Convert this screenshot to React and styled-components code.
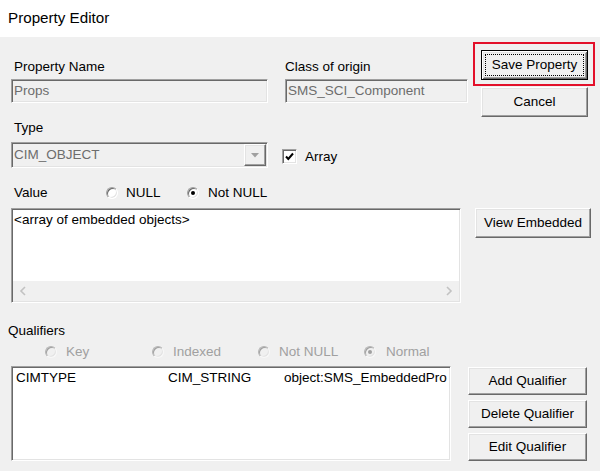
import React from 'react';
import styled, { createGlobalStyle } from 'styled-components';

const GlobalStyle = createGlobalStyle`
  html, body { margin: 0; padding: 0; }
  body {
    width: 600px; height: 471px; overflow: hidden; background: #f0f0f0;
    font-family: "Liberation Sans", Arial, sans-serif;
  }
`;

const Window = styled.div`
  width: 600px; height: 471px; display: flex; flex-direction: column;
  background: #f0f0f0; overflow: hidden;
  font-family: "Liberation Sans", Arial, sans-serif;
  font-size: 13.5px; line-height: 16px; color: #000;
`;

const TitleBar = styled.div`
  height: 37px; box-sizing: border-box; background: #fff;
  padding: 9px 0 0 8px; font-size: 15.2px; line-height: 18px; color: #000;
`;

const Body = styled.div`
  flex: 1; display: flex; flex-direction: column; padding: 5px 0 0 11px;
`;

const Row = styled.div`
  display: flex;
  align-items: ${p => p.$align || 'flex-start'};
  margin-top: ${p => p.$mt || 0}px;
`;

const Fields = styled.div`
  display: flex; gap: 17px; padding-top: 17px;
`;

const Field = styled.div`
  display: flex; flex-direction: column; width: ${p => p.$w}px;
  gap: ${p => p.$gap || 4}px;
`;

const Label = styled.div`
  padding-left: ${p => p.$pl || 0}px;
  margin-left: ${p => p.$ml || 0}px;
  width: ${p => (p.$w ? `${p.$w}px` : 'auto')};
  box-sizing: border-box;
  color: ${p => (p.$disabled ? '#a0a0a0' : '#000')};
  white-space: nowrap;
`;

const sunken = `
  box-sizing: border-box;
  border: 1px solid; border-color: #a0a0a0 #ffffff #ffffff #a0a0a0;
  box-shadow: inset 1px 1px #696969, inset -1px -1px #e3e3e3;
`;

const raised = `
  box-sizing: border-box;
  border: 1px solid; border-color: #ffffff #696969 #696969 #ffffff;
  box-shadow: inset -1px -1px #a0a0a0, inset 1px 1px #e3e3e3;
`;

const TextBox = styled.div`
  ${sunken}
  height: 24px; padding: 2px 2px; line-height: 18px;
  background: #f0f0f0; color: #6d6d6d; white-space: nowrap; overflow: hidden;
`;

const RightCol = styled.div`
  display: flex; flex-direction: column; margin-left: 5px;
`;

const Highlight = styled.div`
  border: 2px solid #e3102a; padding: 6px 5px 4px 6px;
`;

const Button = styled.button`
  width: ${p => p.$w}px; height: ${p => p.$h}px;
  margin: ${p => p.$m || '0'};
  font: inherit; color: #000; background: #f0f0f0; cursor: default;
  display: flex; align-items: center; justify-content: center;
  padding: ${p => (p.$default ? '3px' : '0')};
  ${raised}
  ${p => p.$default && `
    border: 1px solid #000;
    box-shadow: inset 1px 1px #fff, inset -1px -1px #696969, inset 2px 2px #e3e3e3, inset -2px -2px #a0a0a0;
  `}
`;

const FocusRect = styled.span`
  flex: 1; align-self: stretch; display: flex; align-items: center; justify-content: center;
  border: 1px dotted #000;
`;

const Combo = styled.div`
  ${sunken}
  width: 257px; height: 26px; background: #f0f0f0; display: flex; align-items: center;
  padding: 1px 1px 1px 2px; color: #6d6d6d;
`;

const ComboText = styled.div`
  flex: 1; white-space: nowrap;
`;

const DropButton = styled.div`
  ${raised}
  width: 22px; height: 22px; background: #f0f0f0;
  display: flex; align-items: center; justify-content: center;
`;

const CheckRow = styled.div`
  display: flex; align-items: center; height: 26px; margin-left: 14px; gap: 8px;
  padding-top: 3px; box-sizing: border-box;
`;

const CheckBox = styled.span`
  ${sunken}
  width: 15px; height: 15px; background: #fff; flex: none;
  display: flex; align-items: center; justify-content: center;
`;

const RadioItem = styled.div`
  display: flex; align-items: center; gap: ${p => p.$gap || 8}px;
  width: ${p => (p.$w ? `${p.$w}px` : 'auto')};
  color: ${p => (p.$disabled ? '#a0a0a0' : '#000')};
  white-space: nowrap;
`;

const RadioCircle = styled.span`
  width: 12px; height: 12px; border-radius: 50%; box-sizing: border-box; flex: none;
  border: 1px solid;
  border-color: ${p => (p.$disabled ? '#b4b4b4 #f8f8f8 #f8f8f8 #b4b4b4' : '#a0a0a0 #ffffff #ffffff #a0a0a0')};
  box-shadow: ${p => (p.$disabled ? 'inset 1px 1px #a0a0a0, inset -1px -1px #e3e3e3' : 'inset 1px 1px #696969, inset -1px -1px #e3e3e3')};
  background: ${p => (p.$disabled ? '#f0f0f0' : '#fff')};
  display: flex; align-items: center; justify-content: center;
  &::after {
    content: ''; width: 4px; height: 4px; border-radius: 50%;
    background: ${p => (p.$disabled ? '#a0a0a0' : '#000')};
    display: ${p => (p.$checked ? 'block' : 'none')};
  }
`;

const TextArea = styled.div`
  ${sunken}
  width: ${p => p.$w}px; height: 95px; background: #fff;
  display: flex; flex-direction: column;
`;

const AreaContent = styled.div`
  flex: 1; padding: 3px 2px; white-space: nowrap; overflow: hidden;
`;

const HScroll = styled.div`
  height: 20px; background: #f0f0f0; margin: 0 1px 1px 1px;
  display: flex; align-items: center; justify-content: space-between; padding: 0 6px;
`;

const RadioGrid = styled.div`
  display: grid; grid-template-columns: 107px 106px 106px auto;
  padding-left: 34px; margin-top: 5px; height: 16px; align-items: center;
`;

const List = styled.div`
  ${sunken}
  width: 440px; height: 95px; background: #fff; padding: 2px 2px; overflow: hidden;
`;

const ListRow = styled.div`
  display: grid; grid-template-columns: 152px 116px 1fr;
  padding: 1px 0 0 2px; white-space: nowrap;
`;

const Cell = styled.span`
  overflow: hidden;
`;

const ButtonCol = styled.div`
  display: flex; flex-direction: column; gap: 5px; margin: 1px 0 0 17px;
`;

const Chevron = ({ dir }) => (
  <svg width="8" height="10" viewBox="0 0 8 10">
    <path
      d={dir === 'left' ? 'M6 1 L2 5 L6 9' : 'M2 1 L6 5 L2 9'}
      fill="none" stroke="#c2c2c2" strokeWidth="1.6"
    />
  </svg>
);

export default function App() {
  return (
    <Window>
      <GlobalStyle />
      <TitleBar>Property Editor</TitleBar>
      <Body>
        <Row>
          <Fields>
            <Field $w={257}>
              <Label $pl={3}>Property Name</Label>
              <TextBox>Props</TextBox>
            </Field>
            <Field $w={183}>
              <Label>Class of origin</Label>
              <TextBox>SMS_SCI_Component</TextBox>
            </Field>
          </Fields>
          <RightCol>
            <Highlight>
              <Button $w={107} $h={30} $default>
                <FocusRect>Save Property</FocusRect>
              </Button>
            </Highlight>
            <Button $w={107} $h={30} $m="1px 0 0 8px">Cancel</Button>
          </RightCol>
        </Row>

        <Row $mt={3} $align="flex-end">
          <Field $w={257} $gap={6}>
            <Label $pl={3}>Type</Label>
            <Combo>
              <ComboText>CIM_OBJECT</ComboText>
              <DropButton>
                <svg width="8" height="5" viewBox="0 0 8 5">
                  <path d="M0 0 L8 0 L4 4.5 Z" fill="#a0a0a0" />
                </svg>
              </DropButton>
            </Combo>
          </Field>
          <CheckRow>
            <CheckBox>
              <svg width="9" height="9" viewBox="0 0 9 9">
                <path d="M1 4.5 L3.3 7 L8 1.5" fill="none" stroke="#000" strokeWidth="2" />
              </svg>
            </CheckBox>
            <span>Array</span>
          </CheckRow>
        </Row>

        <Row $mt={17} $align="center">
          <Label $pl={3} $w={95}>Value</Label>
          <RadioItem $w={81}>
            <RadioCircle />
            NULL
          </RadioItem>
          <RadioItem $gap={9}>
            <RadioCircle $checked />
            Not NULL
          </RadioItem>
        </Row>

        <Row $mt={7}>
          <TextArea $w={450}>
            <AreaContent>&lt;array of embedded objects&gt;</AreaContent>
            <HScroll>
              <Chevron dir="left" />
              <Chevron dir="right" />
            </HScroll>
          </TextArea>
          <Button $w={116} $h={30} $m="0 0 0 14px">View Embedded</Button>
        </Row>

        <Row $mt={20}>
          <Label $ml={-3}>Qualifiers</Label>
        </Row>

        <RadioGrid>
          <RadioItem $disabled $gap={9}>
            <RadioCircle $disabled />
            Key
          </RadioItem>
          <RadioItem $disabled $gap={9}>
            <RadioCircle $disabled />
            Indexed
          </RadioItem>
          <RadioItem $disabled $gap={9}>
            <RadioCircle $disabled />
            Not NULL
          </RadioItem>
          <RadioItem $disabled $gap={10}>
            <RadioCircle $disabled $checked />
            Normal
          </RadioItem>
        </RadioGrid>

        <Row $mt={6}>
          <List>
            <ListRow>
              <Cell>CIMTYPE</Cell>
              <Cell>CIM_STRING</Cell>
              <Cell>object:SMS_EmbeddedPro</Cell>
            </ListRow>
          </List>
          <ButtonCol>
            <Button $w={119} $h={28}>Add Qualifier</Button>
            <Button $w={119} $h={28}>Delete Qualifier</Button>
            <Button $w={119} $h={28}>Edit Qualifier</Button>
          </ButtonCol>
        </Row>
      </Body>
    </Window>
  );
}
